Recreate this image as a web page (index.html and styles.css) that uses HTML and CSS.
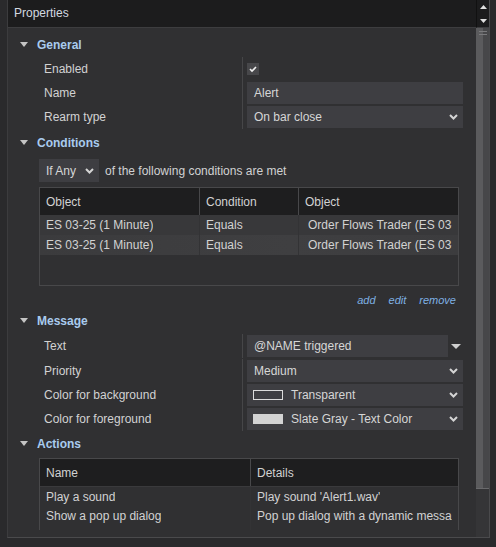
FILE: index.html
```html
<!DOCTYPE html>
<html lang="en">
<head>
  <meta charset="UTF-8">
  <title>Properties</title>
  <link rel="stylesheet" href="styles.css">
</head>
<body>

  <div class="panel">
    <div class="main">
      <div class="title">Properties</div>

      <div class="scroller">

        <div class="section">
          <div class="section-head"><span class="caret"></span>General</div>
          <div class="rows rows-general">
            <div class="row">
              <div class="label">Enabled</div>
              <div class="value">
                <span class="check">
                  <svg width="12" height="12" viewBox="0 0 12 12"><polyline points="3,6 5,8 9,4" fill="none" stroke="#f0f0f0" stroke-width="1.6"/></svg>
                </span>
              </div>
            </div>
            <div class="row">
              <div class="label">Name</div>
              <div class="value"><div class="box">Alert</div></div>
            </div>
            <div class="row">
              <div class="label">Rearm type</div>
              <div class="value">
                <div class="box select">
                  <span class="box-text">On bar close</span>
                  <svg class="chevron" width="9" height="6" viewBox="0 0 9 6"><polyline points="1,1 4.5,4.5 8,1" fill="none" stroke="#d4d4d4" stroke-width="2"/></svg>
                </div>
              </div>
            </div>
          </div>
        </div>

        <div class="section">
          <div class="section-head"><span class="caret"></span>Conditions</div>
          <div class="section-body">
            <div class="d-flex align-center">
              <div class="box select if-any">
                <span class="box-text">If Any</span>
                <svg class="chevron" width="9" height="6" viewBox="0 0 9 6"><polyline points="1,1 4.5,4.5 8,1" fill="none" stroke="#d4d4d4" stroke-width="2"/></svg>
              </div>
              <span class="if-any-text">of the following conditions are met</span>
            </div>

            <div class="grid-table conditions">
              <div class="grid-row grid-head">
                <div class="cell"><div class="clip">Object</div></div>
                <div class="cell"><div class="clip">Condition</div></div>
                <div class="cell"><div class="clip">Object</div></div>
              </div>
              <div class="grid-row grid-item">
                <div class="cell"><div class="clip">ES 03-25 (1 Minute)</div></div>
                <div class="cell"><div class="clip">Equals</div></div>
                <div class="cell cell-indent"><div class="clip">Order Flows Trader (ES 03-25 (1 Minute))</div></div>
              </div>
              <div class="grid-row grid-item grid-item-hover">
                <div class="cell"><div class="clip">ES 03-25 (1 Minute)</div></div>
                <div class="cell"><div class="clip">Equals</div></div>
                <div class="cell cell-indent"><div class="clip">Order Flows Trader (ES 03-25 (1 Minute))</div></div>
              </div>
            </div>

            <div class="links">
              <span class="link">add</span>
              <span class="link">edit</span>
              <span class="link">remove</span>
            </div>
          </div>
        </div>

        <div class="section">
          <div class="section-head"><span class="caret"></span>Message</div>
          <div class="rows rows-message">
            <div class="row row-spaced">
              <div class="label">Text</div>
              <div class="value">
                <div class="box box-grow">@NAME triggered</div>
                <span class="drop-arrow">
                  <svg width="10" height="5" viewBox="0 0 10 5"><polygon points="0,0 10,0 5,5" fill="#cfcfcf"/></svg>
                </span>
              </div>
            </div>
            <div class="row">
              <div class="label">Priority</div>
              <div class="value">
                <div class="box select">
                  <span class="box-text">Medium</span>
                  <svg class="chevron" width="9" height="6" viewBox="0 0 9 6"><polyline points="1,1 4.5,4.5 8,1" fill="none" stroke="#d4d4d4" stroke-width="2"/></svg>
                </div>
              </div>
            </div>
            <div class="row">
              <div class="label">Color for background</div>
              <div class="value">
                <div class="box select">
                  <span class="swatch swatch-empty"></span>
                  <span class="box-text">Transparent</span>
                  <svg class="chevron" width="9" height="6" viewBox="0 0 9 6"><polyline points="1,1 4.5,4.5 8,1" fill="none" stroke="#d4d4d4" stroke-width="2"/></svg>
                </div>
              </div>
            </div>
            <div class="row">
              <div class="label">Color for foreground</div>
              <div class="value">
                <div class="box select">
                  <span class="swatch swatch-gray"></span>
                  <span class="box-text">Slate Gray - Text Color</span>
                  <svg class="chevron" width="9" height="6" viewBox="0 0 9 6"><polyline points="1,1 4.5,4.5 8,1" fill="none" stroke="#d4d4d4" stroke-width="2"/></svg>
                </div>
              </div>
            </div>
          </div>
        </div>

        <div class="section">
          <div class="section-head"><span class="caret"></span>Actions</div>
          <div class="section-body section-body-tight">
            <div class="grid-table actions">
              <div class="grid-row grid-head">
                <div class="cell"><div class="clip">Name</div></div>
                <div class="cell"><div class="clip">Details</div></div>
              </div>
              <div class="grid-row grid-plain">
                <div class="cell"><div class="clip">Play a sound</div></div>
                <div class="cell"><div class="clip">Play sound 'Alert1.wav'</div></div>
              </div>
              <div class="grid-row grid-plain">
                <div class="cell"><div class="clip">Show a pop up dialog</div></div>
                <div class="cell"><div class="clip">Pop up dialog with a dynamic message</div></div>
              </div>
              <div class="grid-row grid-plain">
                <div class="cell"><div class="clip"></div></div>
                <div class="cell"><div class="clip"></div></div>
              </div>
            </div>
          </div>
        </div>

      </div>
    </div>

    <div class="vscroll">
      <div class="vscroll-btns">
        <svg width="7" height="4" viewBox="0 0 7 4"><polygon points="3.5,0 7,4 0,4" fill="#e0e0e0"/></svg>
        <svg width="7" height="4" viewBox="0 0 7 4"><polygon points="0,0 7,0 3.5,4" fill="#e0e0e0"/></svg>
      </div>
      <div class="vscroll-track">
        <div class="thumb">
          <span class="grip"></span>
          <span class="grip"></span>
        </div>
      </div>
    </div>
  </div>

</body>
</html>
```

FILE: styles.css
```css
* {
  box-sizing: border-box;
}
body {
  margin: 0;
  padding: 0;
  background: #2a2a2c;
  font-family: "Liberation Sans", Arial, sans-serif;
  font-size: 12px;
  color: #d2d2d2;
}

.d-flex {
  display: flex;
}
.align-center {
  align-items: center;
}

.panel {
  display: flex;
  margin-left: 7px;
  width: 483px;
  height: 538px;
  background: #303032;
  border-left: 1px solid #3c3c3e;
  border-right: 1px solid #4a4a4c;
  border-bottom: 1px solid #4a4a4c;
}

.main {
  width: 468px;
  display: flex;
  flex-direction: column;
}

.title {
  height: 28px;
  line-height: 27px;
  padding-left: 6px;
  background: #1c1c1d;
  border-bottom: 1px solid #3d3d3f;
  color: #d3d9e0;
}

.scroller {
  height: 502px;
  overflow: hidden;
  padding-top: 4px;
}

.section-head {
  height: 24px;
  display: flex;
  align-items: center;
  padding-left: 12px;
  padding-top: 1px;
  font-weight: bold;
  color: #a9cbee;
}
.caret {
  width: 0;
  height: 0;
  border-left: 4.5px solid transparent;
  border-right: 4.5px solid transparent;
  border-top: 5px solid #c4c4c4;
  margin-right: 9px;
  margin-top: -1px;
}

.rows-general {
  padding-top: 1px;
  margin-bottom: 1px;
}
.rows-message {
  padding-top: 2px;
}
.row {
  display: flex;
  height: 24px;
}
.row-spaced {
  margin-bottom: 1px;
}
.label {
  width: 234px;
  padding-left: 36px;
  display: flex;
  align-items: center;
}
.value {
  flex: 1;
  display: flex;
  align-items: center;
  border-left: 1px solid #464648;
  padding-left: 4px;
  padding-right: 13px;
}

.check {
  width: 12px;
  height: 12px;
  background: #47474a;
  display: flex;
}

.box {
  flex: 1;
  height: 22px;
  display: flex;
  align-items: center;
  padding: 0 5px 0 7px;
  background: #3e3e42;
  color: #d6d6d6;
  white-space: nowrap;
}
.box-text {
  flex: 1;
}
.box-grow {
  flex: 1;
}
.drop-arrow {
  width: 15px;
  display: flex;
  justify-content: center;
  padding-left: 1px;
}

.swatch {
  width: 30px;
  height: 10px;
  margin-left: -1px;
  margin-right: 8px;
}
.swatch-empty {
  border: 1px solid #dcdcdc;
}
.swatch-gray {
  background: #d3d3d3;
}

.section-body {
  padding: 5px 17px 0 31px;
}
.section-body-tight {
  padding-top: 3px;
}

.if-any {
  flex: none;
  width: 60px;
  height: 23px;
  padding-right: 5px;
}
.if-any-text {
  margin-left: 6px;
}

.grid-table {
  margin-top: 5px;
  border: 1px solid #48484a;
  overflow: hidden;
}
.conditions {
  height: 99px;
}
.actions {
  margin-top: 0;
  height: 100px;
  border-bottom: none;
}

.grid-row {
  display: grid;
}
.conditions .grid-row {
  grid-template-columns: 160px 99px 1fr;
}
.actions .grid-row {
  grid-template-columns: 211px 1fr;
}

.cell {
  display: flex;
  align-items: center;
  padding: 0 6px;
  min-width: 0;
}
.clip {
  overflow: hidden;
  white-space: nowrap;
}
.cell-indent {
  padding-left: 9px;
}

.grid-head {
  height: 27px;
  background: #1e1e1f;
}
.grid-head .cell {
  border-right: 1px solid #48484a;
}
.grid-head .cell:last-child {
  border-right: none;
}

.grid-item {
  height: 20px;
  background: #38383a;
}
.grid-item-hover {
  background: linear-gradient(to right, #3b3b3d, #3f3f41 60%, #3c3c3e);
}
.grid-item .cell,
.grid-plain .cell {
  border-right: 1px solid #333335;
}
.grid-item .cell:last-child,
.grid-plain .cell:last-child {
  border-right: none;
}

.grid-plain {
  height: 19px;
}
.actions .grid-head {
  height: 28px;
  border-bottom: 1px solid #3a3a3c;
}

.links {
  height: 22px;
  display: flex;
  justify-content: flex-end;
  gap: 13px;
  padding-top: 7px;
  padding-right: 3px;
  line-height: 14px;
  font-size: 11px;
}
.link {
  font-style: italic;
  color: #7fb1e4;
}

.vscroll {
  width: 13px;
  display: flex;
  flex-direction: column;
}
.vscroll-btns {
  height: 28px;
  background: #1c1c1d;
  border-bottom: 1px solid #3d3d3f;
  border-left: 1px solid #111;
  display: flex;
  flex-direction: column;
  align-items: center;
  justify-content: center;
  gap: 10px;
}
.vscroll-track {
  flex: 1;
  background: #353537;
}
.thumb {
  height: 461px;
  background: linear-gradient(to right, #5b5b5d 0, #5b5b5d 7px, #474749 7px);
  border-bottom: 1px solid #6a6a6c;
  display: flex;
  flex-direction: column;
  align-items: flex-end;
  padding: 3px 2px 0 0;
  gap: 2px;
}
.grip {
  width: 8px;
  height: 1px;
  background: #7a7a7c;
}
```
